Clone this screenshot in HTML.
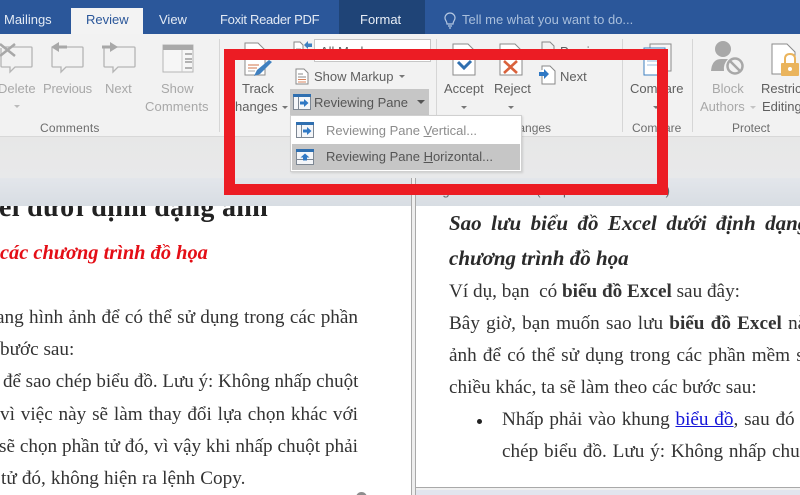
<!DOCTYPE html>
<html><head><meta charset="utf-8">
<style>
html,body{margin:0;padding:0}
#p{position:relative;width:800px;height:495px;overflow:hidden;background:#fff;font-family:"Liberation Sans",sans-serif}
.a{position:absolute}
.t{position:absolute;white-space:nowrap;line-height:1;font-size:13px;color:#5f5f5f}
.g{color:#a8a8a8}
.tab{position:absolute;top:13px;font-size:13px;line-height:1;color:#e3eaf4;white-space:nowrap}
.s{position:absolute;white-space:nowrap;line-height:1;font-family:"Liberation Serif",serif;font-size:19.2px;color:#333}
.j{right:442px;text-align:justify;text-align-last:justify}
.h{font-size:21px;font-weight:bold;font-style:italic;color:#2a2a2a}
.sep{position:absolute;top:39px;width:1px;height:93px;background:#d6d6d6}
svg{position:absolute;overflow:visible}
</style></head><body><div id="p">
<div class="a" style="left:0;top:0;width:800px;height:34px;background:#2b579a"></div>
<div class="a" style="left:339px;top:0;width:86px;height:34px;background:#1f4477"></div>
<div class="a" style="left:71px;top:8px;width:72px;height:27px;background:#f3f3f3"></div>
<div class="tab" style="left:4px">Mailings</div>
<div class="tab" style="left:86px;color:#2b579a">Review</div>
<div class="tab" style="left:159px">View</div>
<div class="tab" style="left:220px;letter-spacing:-.3px">Foxit Reader PDF</div>
<div class="tab" style="left:360px;color:#e8eef6">Format</div>
<div class="tab" style="left:462px;color:#a9bfdc">Tell me what you want to do...</div>
<svg style="left:442px;top:12px" width="16" height="18" viewBox="0 0 16 18"><path d="M5 12C5 9 3 8.500 3 6A5 5 0 0 1 13 6C13 8.500 11 9 11 12ZM6 14H10M7 16H9" fill="none" stroke="#b5c8e2" stroke-width="1.200"/></svg>

<div class="a" style="left:0;top:34px;width:800px;height:103px;background:#f2f2f2;border-bottom:1px solid #d8d8d8;box-sizing:border-box"></div>
<div class="a" style="left:0;top:137px;width:800px;height:41px;background:linear-gradient(#e7e7e7,#e8e9ea)"></div>
<div class="a" style="left:0;top:178px;width:800px;height:28px;background:linear-gradient(#e3e6eb,#d8dde3)"></div>
<div class="sep" style="left:219px"></div>
<div class="sep" style="left:436px"></div>
<div class="sep" style="left:622px"></div>
<div class="sep" style="left:692px"></div>

<!-- Comments icons -->
<svg style="left:0;top:42px" width="210" height="34" viewBox="0 0 210 34">
<g fill="none" stroke="#b5b5b5" stroke-width="1.300">
<path d="M2 5H31Q32 5 32 6V24Q32 25 31 25H15L10 30V25H2Q1 25 1 24V6"/>
<path d="M53 5H82Q83 5 83 6V24Q83 25 82 25H66L61 30V25H53Q52 25 52 24V6Z"/>
<path d="M105 5H134Q135 5 135 6V24Q135 25 134 25H118L113 30V25H105Q104 25 104 24V6Z"/>
</g>
<path d="M0 2L15 14M15 2L0 14" stroke="#a8a8a8" stroke-width="2.500"/>
<path d="M51 5L59 0V3.500H67V6.500H59V10Z" fill="#a8a8a8"/>
<path d="M118 5L110 0V3.500H102V6.500H110V10Z" fill="#a8a8a8"/>
<rect x="163" y="3" width="30" height="27" fill="#f6f6f6" stroke="#b5b5b5"/><rect x="163" y="3" width="30" height="5" fill="#a9a9a9"/>
<path d="M182 8V30" stroke="#c8c8c8"/><path d="M185 12H192M185 17H192M185 20H192M185 26H192" stroke="#9c9c9c" stroke-width="1.500"/>
</svg>
<div class="t g" style="left:-2px;top:82px">Delete</div>
<div class="t g" style="left:43px;top:82px;letter-spacing:-.2px">Previous</div>
<div class="t g" style="left:105px;top:82px">Next</div>
<div class="t g" style="left:161px;top:82px">Show</div>
<div class="t g" style="left:145px;top:100px;letter-spacing:.1px">Comments</div>
<div class="t" style="left:40px;top:122px;font-size:12px;color:#6d6d6d;letter-spacing:.2px">Comments</div>
<div class="a" style="left:14px;top:105px;border:3px solid transparent;border-top-color:#bbb;border-bottom:0"></div>

<!-- Track changes -->
<svg style="left:243px;top:42px" width="34" height="36" viewBox="0 0 34 36">
<path d="M2 33V1H15L22 8V33Z" fill="#fff" stroke="#8b8b8b"/>
<path d="M5 23H16M5 26H14" stroke="#d2734a"/><path d="M5 29H12" stroke="#aaa"/>
<path d="M11 34L14 28L26 18L29 20L17 32Z" fill="#3f80c0"/>
</svg>
<div class="t" style="left:242px;top:82px">Track</div>
<div class="t" style="left:235px;top:100px">hanges</div>
<div class="a" style="left:282px;top:106px;border:3px solid transparent;border-top-color:#777;border-bottom:0"></div>

<!-- All markup -->
<svg style="left:293px;top:41px" width="20" height="18" viewBox="0 0 20 18"><path d="M1 17V1H7L10 4V17Z" fill="#fff" stroke="#888"/><path d="M3 8H8M3 11H8M3 14H8" stroke="#999"/><path d="M11 4L15 0V2.500H19V6H15V8Z" fill="#3f80c0"/></svg>
<div class="a" style="left:314px;top:39px;width:117px;height:23px;background:#fff;border:1px solid #c6c6c6;box-sizing:border-box"></div>
<div class="t" style="left:320px;top:45px;font-size:13px">All Markup</div>

<!-- Show markup -->
<svg style="left:295px;top:68px" width="14" height="17" viewBox="0 0 14 17"><path d="M1 16V1H9L13 5V16Z" fill="#fff" stroke="#8a8a8a"/><path d="M3 6H8M3 9H11" stroke="#888"/><path d="M3 11.500H11M3 14H11" stroke="#d8855f"/></svg>
<div class="t" style="left:314px;top:70px">Show Markup</div>
<div class="a" style="left:399px;top:75px;border:3px solid transparent;border-top-color:#777;border-bottom:0"></div>

<!-- Reviewing pane button -->
<div class="a" style="left:290px;top:89px;width:139px;height:26px;background:#c6c6c6"></div>
<svg style="left:293px;top:94px" width="18" height="16" viewBox="0 0 18 16"><rect x=".5" y=".5" width="17" height="15" fill="#f4f6f9" stroke="#7d8793"/><rect x="0" y="0" width="18" height="3" fill="#2f6fb0"/><path d="M5.500 3V16" stroke="#7d8793"/><path d="M7 7.500H11V5L15.500 9L11 13V10.500H7Z" fill="#2f78c4"/></svg>
<div class="t" style="left:314px;top:96px;color:#555">Reviewing Pane</div>
<div class="a" style="left:417px;top:100px;border:4px solid transparent;border-top-color:#555;border-bottom:0"></div>

<!-- Accept / Reject / prev / Next -->
<svg style="left:451px;top:42px" width="92" height="34" viewBox="0 0 92 34">
<path d="M2 33V2H17L24 9V33Z" fill="#fff" stroke="#8b8b8b"/>
<path d="M49 33V2H64L71 9V33Z" fill="#fff" stroke="#8b8b8b"/>
<path d="M7 20L13 26L20 19" fill="none" stroke="#2f6fb0" stroke-width="3"/>
<path d="M53 19L66 31M66 19L53 31" stroke="#d9623c" stroke-width="2.600"/>
</svg>
<div class="t" style="left:444px;top:82px">Accept</div>
<div class="t" style="left:494px;top:82px">Reject</div>
<div class="a" style="left:461px;top:106px;border:3px solid transparent;border-top-color:#777;border-bottom:0"></div>
<div class="a" style="left:508px;top:106px;border:3px solid transparent;border-top-color:#777;border-bottom:0"></div>
<svg style="left:539px;top:41px" width="18" height="45" viewBox="0 0 18 45">
<path d="M3 8V1H11L15 5V8" fill="none" stroke="#888"/>
<path d="M3 33V43H16V30L11 25H3V29" fill="#fff" stroke="#888"/>
<path d="M0 31H5V28L10 33L5 38V35H0Z" fill="#2f78c4"/>
</svg>
<div class="t" style="left:560px;top:45px">Previous</div>
<div class="t" style="left:560px;top:70px">Next</div>
<div class="t" style="left:503px;top:122px;font-size:12px;color:#6d6d6d">Changes</div>

<!-- Compare -->
<svg style="left:643px;top:43px" width="30" height="34" viewBox="0 0 30 34"><rect x="7" y="1" width="21" height="27" fill="#f7f7f7" stroke="#8b8b8b"/><rect x="1" y="5" width="21" height="27" fill="#fff" stroke="#3f80c0"/><path d="M4 14H19M4 18H19M4 22H19" stroke="#9bbfe0"/></svg>
<div class="t" style="left:630px;top:82px">Compare</div>
<div class="a" style="left:653px;top:106px;border:3px solid transparent;border-top-color:#777;border-bottom:0"></div>
<div class="t" style="left:632px;top:122px;font-size:12px;color:#6d6d6d">Compare</div>

<!-- Block authors -->
<svg style="left:710px;top:40px" width="36" height="36" viewBox="0 0 36 36"><circle cx="13" cy="9" r="8" fill="#a8a8a8"/><path d="M1 31Q2 19 11 19H18Q13 24 14 31Z" fill="#a8a8a8"/><circle cx="25" cy="26" r="7.500" fill="#f2f2f2" stroke="#a8a8a8" stroke-width="2.500"/><path d="M20 21L30 31" stroke="#a8a8a8" stroke-width="2.500"/></svg>
<div class="t g" style="left:712px;top:82px">Block</div>
<div class="t g" style="left:700px;top:100px">Authors</div>
<div class="a" style="left:750px;top:106px;border:3px solid transparent;border-top-color:#c4c4c4;border-bottom:0"></div>
<svg style="left:771px;top:43px" width="29" height="36" viewBox="0 0 29 36"><path d="M1 31V1H16L24 9V31Z" fill="#fff" stroke="#8b8b8b"/><rect x="10" y="20" width="18" height="13" rx="1" fill="#eab45c"/><path d="M14 20V16Q14 11 19 11Q24 11 24 16V20" fill="none" stroke="#eab45c" stroke-width="2"/><circle cx="19" cy="26" r="2" fill="#fff"/></svg>
<div class="t" style="left:761px;top:82px">Restrict</div>
<div class="t" style="left:762px;top:100px">Editing</div>
<div class="t" style="left:732px;top:122px;font-size:12px;color:#6d6d6d">Protect</div>

<!-- Panes -->
<div class="a" style="left:411px;top:178px;width:1px;height:317px;background:#a9a9a9"></div>
<div class="a" style="left:412px;top:178px;width:3px;height:317px;background:#eeeeee"></div>
<div class="a" style="left:415px;top:178px;width:1px;height:317px;background:#a9a9a9"></div>
<div class="t" style="left:425px;top:184px;font-size:13px;color:#62676d">Original Document (Simp? - Tran Dinh Da)</div>
<div class="t" style="left:391px;top:191px;font-size:10px;color:#62676d">^</div>
<div class="a" style="left:0;top:206px;width:411px;height:289px;background:#fff"></div>
<div class="a" style="left:416px;top:206px;width:384px;height:289px;background:#fff"></div>
<div class="a" style="left:416px;top:487px;width:384px;height:1px;background:#a9a9a9"></div>
<div class="a" style="left:416px;top:488px;width:384px;height:2px;background:#f0f0f0"></div>
<div class="a" style="left:416px;top:490px;width:384px;height:5px;background:#e2e5ee"></div>

<!-- Left document -->
<div class="a" style="left:0;top:206px;width:411px;height:40px;overflow:hidden">
<div class="s" style="right:143px;top:-12px;font-size:28px;font-weight:bold;color:#222;letter-spacing:.3px">ei dưới định dạng ảnh</div>
</div>
<div class="s" style="left:0;top:243px;font-size:20.4px;font-weight:bold;font-style:italic;color:#e40e16">các chương trình đồ họa</div>
<div class="s j" style="left:-4px;top:308px">ang hình ảnh để có thể sử dụng trong các phần</div>
<div class="s" style="left:0;top:340px">bước sau:</div>
<div class="s j" style="left:3px;top:372px;font-size:19px">để sao chép biểu đồ. Lưu ý: Không nhấp chuột</div>
<div class="s j" style="left:0;top:405px">vì việc này sẽ làm thay đổi lựa chọn khác với</div>
<div class="s j" style="left:-1px;top:437px">sẽ chọn phần tử đó, vì vậy khi nhấp chuột phải</div>
<div class="s" style="left:1px;top:469px;word-spacing:.3px">tử đó, không hiện ra lệnh Copy.</div>
<div class="a" style="left:356px;top:492px;width:11px;height:11px;border-radius:50%;background:#8d8d8d"></div>

<!-- Right document -->
<div class="s h" style="left:449px;top:213px;word-spacing:4.200px">Sao lưu biểu đồ Excel dưới định dạng</div>
<div class="s h" style="left:449px;top:248px">chương trình đồ họa</div>
<div class="s" style="left:449px;top:282px">Ví dụ, bạn &nbsp;có <b>biểu đồ Excel</b> sau đây:</div>
<div class="s" style="left:449px;top:314px;word-spacing:1.400px">Bây giờ, bạn muốn sao lưu <b>biểu đồ Excel</b> nà</div>
<div class="s" style="left:449px;top:346px;word-spacing:1.400px">ảnh để có thể sử dụng trong các phần mềm s</div>
<div class="s" style="left:449px;top:378px">chiều khác, ta sẽ làm theo các bước sau:</div>
<div class="a" style="left:477px;top:419px;width:5px;height:5px;border-radius:50%;background:#222"></div>
<div class="s" style="left:502px;top:410px;word-spacing:1px">Nhấp phải vào khung <span style="color:#1414d8;text-decoration:underline">biểu đồ</span>, sau đó</div>
<div class="s" style="left:502px;top:442px;word-spacing:1px">chép biểu đồ. Lưu ý: Không nhấp chuộ</div>

<!-- Red frame -->
<div class="a" style="left:224px;top:49px;width:444px;height:146px;border:11px solid #ec1c24;box-sizing:border-box"></div>

<!-- Dropdown menu, over the frame -->
<div class="a" style="left:290px;top:115px;width:232px;height:57px;background:#fff;border:1px solid #d0d0d0;box-sizing:border-box;box-shadow:1px 1px 2px rgba(0,0,0,.12)"></div>
<div class="a" style="left:292px;top:144px;width:228px;height:26px;background:#c6c6c6"></div>
<svg style="left:296px;top:122px" width="18" height="16" viewBox="0 0 18 16"><rect x=".5" y=".5" width="17" height="15" fill="#f4f6f9" stroke="#7d8793"/><rect x="0" y="0" width="18" height="3" fill="#2f6fb0"/><path d="M5.500 3V16" stroke="#7d8793"/><path d="M7 7.500H11V5L15.500 9L11 13V10.500H7Z" fill="#2f78c4"/></svg>
<svg style="left:296px;top:149px" width="18" height="16" viewBox="0 0 18 16"><rect x=".5" y=".5" width="17" height="15" fill="#f4f6f9" stroke="#7d8793"/><rect x="0" y="0" width="18" height="3" fill="#2f6fb0"/><path d="M0 10.500H18" stroke="#7d8793"/><path d="M9 4.500L13.500 8.500H11V11.500H7V8.500H4.500Z" fill="#2f78c4"/></svg>
<div class="t" style="left:326px;top:124px;color:#8c8c8c">Reviewing Pane <u>V</u>ertical...</div>
<div class="t" style="left:326px;top:150px;color:#555">Reviewing Pane <u>H</u>orizontal...</div>
</div></body></html>
